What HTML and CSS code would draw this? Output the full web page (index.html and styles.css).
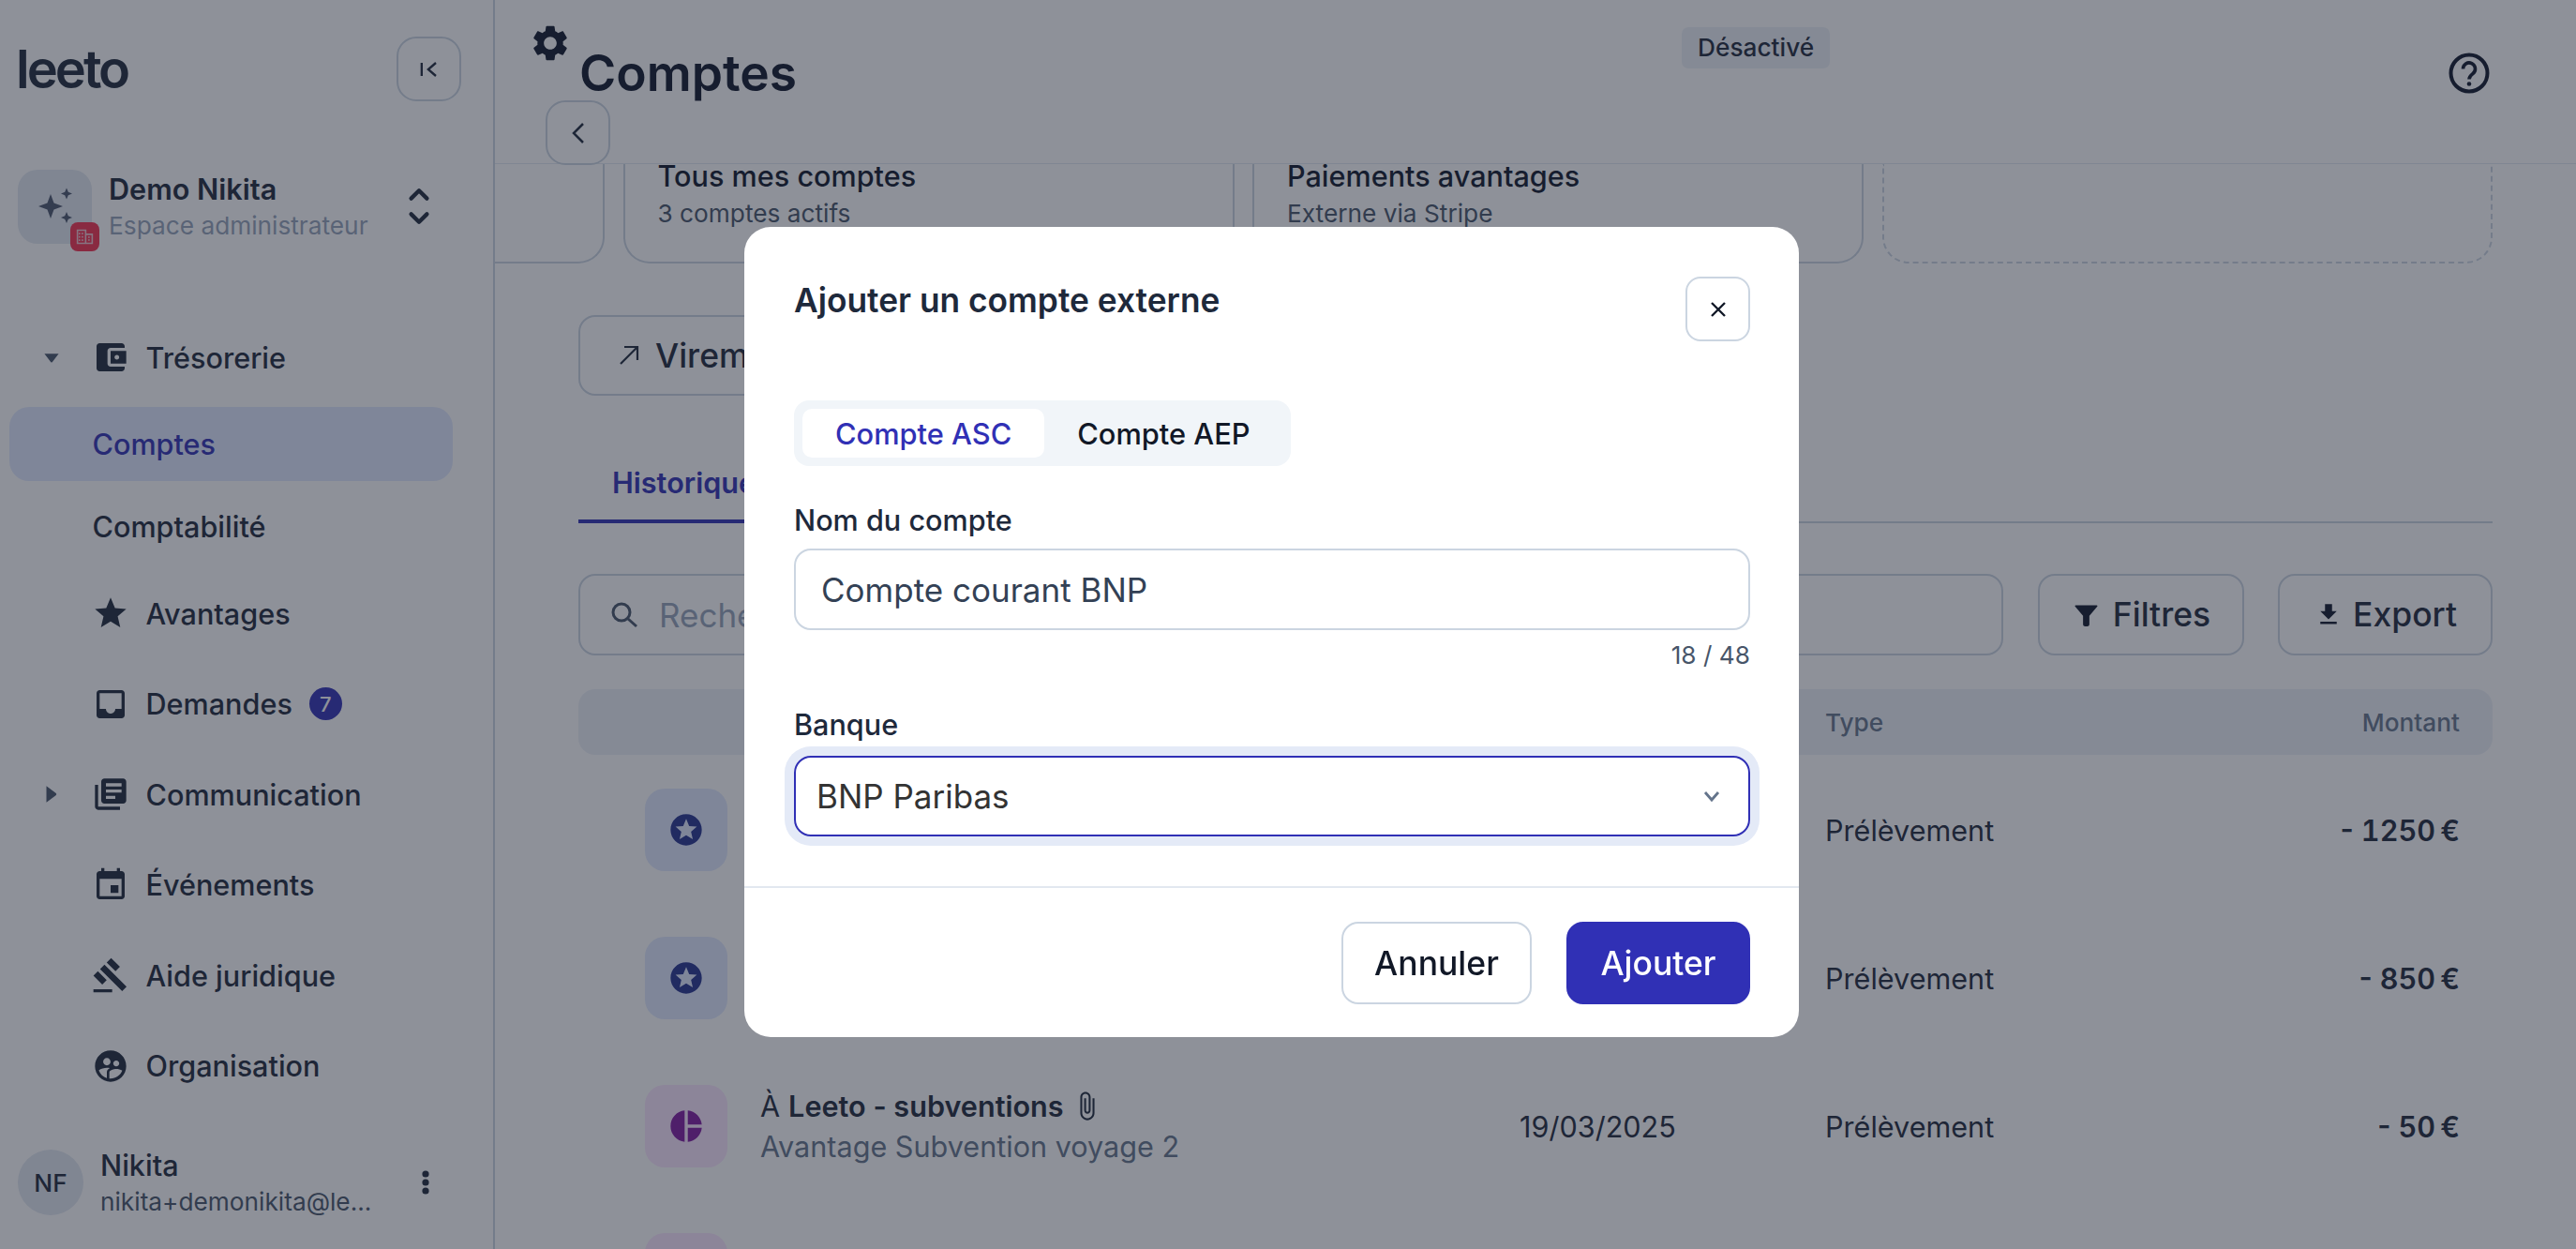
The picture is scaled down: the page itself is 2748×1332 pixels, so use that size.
FILE: index.html
```html
<!DOCTYPE html>
<html lang="fr">
<head>
<meta charset="utf-8">
<title>Comptes - Leeto</title>
<link rel="stylesheet" href="styles.css">
</head>
<body>
<div class="app">
  <aside class="sidebar">
    <div class="brand-row">
      <span class="logo">leeto</span>
      <button class="icon-btn collapse"><svg viewBox="0 0 24 24" class="i22"><path d="M5 6v12M18 6l-7 6 7 6" fill="none" stroke="currentColor" stroke-width="2"/></svg></button>
    </div>
    <div class="org">
      <div class="org-avatar">
        <svg viewBox="0 0 48 48" class="i-spark"><path d="M19 11L22.500 20.500 32 24 22.500 27.500 19 37 15.500 27.500 6 24 15.500 20.500zM36 4.500L37.800 8.700 42 10.500 37.800 12.300 36 16.500 34.200 12.300 30 10.500 34.200 8.700zM36 30L37.800 34.200 42 36 37.800 37.800 36 42 34.200 37.800 30 36 34.200 34.200z" fill="#4b566d"/></svg>
        <span class="org-badge"><svg viewBox="0 0 24 24" class="i-badge"><path d="M3 4h10v16H3zM13 9h8v11h-8zM5.500 7v2M9 7v2M5.500 11v2M9 11v2M5.500 15v2M9 15v2M16 12.500h2M16 16h2" fill="none" stroke="#f0c4cf" stroke-width="1.800"/></svg></span>
      </div>
      <div class="org-text">
        <div class="org-name">Demo Nikita</div>
        <div class="org-role">Espace administrateur</div>
      </div>
      <svg viewBox="0 0 20 40" class="i-updown"><path d="M3 13l7-7 7 7M3 27l7 7 7-7" fill="none" stroke="#1e293b" stroke-width="3.600" stroke-linecap="round" stroke-linejoin="round"/></svg>
    </div>
    <nav class="nav">
      <a class="nav-item">
        <span class="caret"><svg viewBox="0 0 16 12" class="i-caret"><path d="M1 2h14l-6 8a1.200 1.200 0 0 1-2 0z" fill="#475569"/></svg></span>
        <svg viewBox="0 0 24 24" class="nav-icon"><path d="M21 18v1c0 1.100-.9 2-2 2H5c-1.110 0-2-.9-2-2V5c0-1.100.89-2 2-2h14c1.100 0 2 .9 2 2v1h-9c-1.110 0-2 .9-2 2v8c0 1.100.89 2 2 2h9zm-9-2h10V8H12v8zm4-2.500c-.83 0-1.500-.67-1.500-1.500s.67-1.500 1.500-1.500 1.500.67 1.500 1.500-.67 1.500-1.500 1.500z"/></svg>
        <span>Trésorerie</span>
      </a>
      <a class="nav-item sub sub-first active"><span>Comptes</span></a>
      <a class="nav-item sub sub-second"><span>Comptabilité</span></a>
      <a class="nav-item after-sub">
        <span class="caret"></span>
        <svg viewBox="0 0 24 24" class="nav-icon"><path d="M12 17.270L18.180 21l-1.640-7.030L22 9.240l-7.190-.61L12 2 9.190 8.630 2 9.240l5.460 4.730L5.820 21z"/></svg>
        <span>Avantages</span>
      </a>
      <a class="nav-item">
        <span class="caret"></span>
        <svg viewBox="0 0 24 24" class="nav-icon"><path d="M19 3H4.990c-1.110 0-1.980.89-1.980 2L3 19c0 1.100.88 2 1.990 2H19c1.100 0 2-.9 2-2V5c0-1.110-.9-2-2-2zm0 12h-4c0 1.660-1.350 3-3 3s-3-1.340-3-3H4.990V5H19v10z"/></svg>
        <span>Demandes</span>
        <span class="count">7</span>
      </a>
      <a class="nav-item">
        <span class="caret"><svg viewBox="0 0 12 16" class="i-caret-r"><path d="M2 1v14l8-6a1.200 1.200 0 0 0 0-2z" fill="#475569"/></svg></span>
        <svg viewBox="0 0 24 24" class="nav-icon"><path d="M4 6H2v14c0 1.100.9 2 2 2h14v-2H4V6zm16-4H8c-1.100 0-2 .9-2 2v12c0 1.100.9 2 2 2h12c1.100 0 2-.9 2-2V4c0-1.100-.9-2-2-2zm-1 9H9V9h10v2zm-4 4H9v-2h6v2zm4-8H9V5h10v2z"/></svg>
        <span>Communication</span>
      </a>
      <a class="nav-item">
        <span class="caret"></span>
        <svg viewBox="0 0 24 24" class="nav-icon"><path d="M17 12h-5v5h5v-5zM16 1v2H8V1H6v2H5c-1.110 0-1.990.9-1.990 2L3 19c0 1.100.89 2 2 2h14c1.100 0 2-.9 2-2V5c0-1.100-.9-2-2-2h-1V1h-2zm3 18H5V8h14v11z"/></svg>
        <span>Événements</span>
      </a>
      <a class="nav-item">
        <span class="caret"></span>
        <svg viewBox="0 0 24 24" class="nav-icon"><path d="M1 21h12v2H1zM5.245 8.070l2.830-2.827 14.140 14.142-2.828 2.828zM12.317 1l5.657 5.656-2.830 2.830-5.657-5.660zM3.825 9.485l5.657 5.657-2.828 2.828-5.657-5.657z"/></svg>
        <span>Aide juridique</span>
      </a>
      <a class="nav-item">
        <span class="caret"></span>
        <svg viewBox="0 0 24 24" class="nav-icon"><path d="M11.990 2c-5.520 0-10 4.480-10 10s4.480 10 10 10 10-4.480 10-10-4.480-10-10-10zm3.610 6.340c1.070 0 1.930.86 1.930 1.930s-.86 1.930-1.930 1.930-1.930-.86-1.930-1.930c-.01-1.070.86-1.930 1.930-1.930zm-6-1.580c1.300 0 2.360 1.060 2.360 2.360s-1.060 2.360-2.360 2.360-2.360-1.060-2.360-2.360c0-1.310 1.050-2.360 2.360-2.360zm0 9.130v3.750c-2.400-.75-4.300-2.600-5.140-4.960 1.050-1.120 3.670-1.690 5.140-1.690.53 0 1.200.08 1.900.22-1.640.87-1.900 2.020-1.900 2.680zM11.990 20c-.27 0-.53-.01-.79-.04v-4.070c0-1.420 2.940-2.130 4.400-2.130 1.070 0 2.920.39 3.840 1.150-1.170 2.970-4.060 5.090-7.450 5.090z"/></svg>
        <span>Organisation</span>
      </a>
    </nav>
    <div class="user">
      <div class="user-avatar">NF</div>
      <div class="user-text">
        <div class="user-name">Nikita</div>
        <div class="user-mail">nikita+demonikita@le...</div>
      </div>
      <svg viewBox="0 0 8 26" class="i-dots"><circle cx="4" cy="4" r="3.600"/><circle cx="4" cy="13" r="3.600"/><circle cx="4" cy="22" r="3.600"/></svg>
    </div>
  </aside>

  <main class="main">
    <header class="topbar">
      <div class="top-left">
        <svg viewBox="2 2 20 20" class="i-gear"><path d="M19.140 12.940c.04-.3.06-.61.06-.94 0-.32-.02-.64-.07-.94l2.030-1.580c.18-.14.23-.41.12-.61l-1.920-3.320c-.12-.22-.37-.29-.59-.22l-2.390.96c-.5-.38-1.030-.7-1.620-.94l-.36-2.540c-.04-.24-.24-.41-.48-.41h-3.840c-.24 0-.43.17-.47.41l-.36 2.540c-.59.24-1.130.57-1.620.94l-2.390-.96c-.22-.08-.47 0-.59.22L2.740 8.870c-.12.21-.08.47.12.61l2.030 1.580c-.05.3-.09.63-.09.94s.02.64.07.94l-2.030 1.580c-.18.14-.23.41-.12.61l1.920 3.320c.12.22.37.29.59.22l2.390-.96c.5.38 1.030.7 1.620.94l.36 2.540c.05.24.24.41.48.41h3.840c.24 0 .44-.17.47-.41l.36-2.540c.59-.24 1.130-.56 1.620-.94l2.390.96c.22.08.47 0 .59-.22l1.920-3.320c.12-.22.07-.47-.12-.61l-2.010-1.580zM12 15.600c-1.980 0-3.600-1.620-3.600-3.600s1.620-3.600 3.600-3.600 3.600 1.620 3.600 3.600-1.620 3.600-3.600 3.600z"/></svg>
        <button class="icon-btn back"><svg viewBox="0 0 24 24" class="i-back"><path d="M16 4l-8 8 8 8" fill="none" stroke="currentColor" stroke-width="2"/></svg></button>
      </div>
      <h1 class="page-title">Comptes</h1>
      <span class="status">Désactivé</span>
      <svg viewBox="0 0 44 44" class="i-help"><circle cx="22" cy="22" r="19.500" fill="none" stroke="currentColor" stroke-width="4"/><path d="M15.500 17.500a6.500 6.500 0 1 1 10.500 5c-2.500 2-4 3-4 6" fill="none" stroke="currentColor" stroke-width="3.600"/><circle cx="22" cy="33.500" r="2.300" fill="currentColor"/></svg>
    </header>

    <section class="content">
      <div class="cards">
        <div class="card"></div>
        <div class="card"><div class="card-title">Tous mes comptes</div><div class="card-sub">3 comptes actifs</div></div>
        <div class="card"><div class="card-title">Paiements avantages</div><div class="card-sub">Externe via Stripe</div></div>
        <div class="card dashed"></div>
      </div>

      <div class="actions">
        <button class="btn transfer"><svg viewBox="0 0 24 24" class="i-arrow"><path d="M3 21L21 3M7 3h14v14" fill="none" stroke="currentColor" stroke-width="2.200"/></svg>Virement</button>
      </div>

      <div class="tabs"><a class="tab">Historique</a></div>

      <div class="toolbar">
        <div class="search">
          <svg viewBox="0 0 30 30" class="i-search"><circle cx="12" cy="12" r="9" fill="none" stroke="#475569" stroke-width="3"/><path d="M19 19l9 8" stroke="#475569" stroke-width="3"/></svg>
          <span class="placeholder">Rechercher</span>
        </div>
        <button class="btn filter"><svg viewBox="0 0 24 24" class="i-tool"><path d="M2 3h20c.6 0 .9.7.5 1.200L15 13v8c0 1.300-1 2-2 2h-2c-1 0-2-.7-2-2v-8L1.500 4.200C1.100 3.700 1.400 3 2 3z"/></svg>Filtres</button>
        <button class="btn export"><svg viewBox="4 2 16 20" class="i-tool dl"><path d="M5 20h14v-2H5v2zM19 9h-4V3H9v6H5l7 7 7-7z"/></svg>Export</button>
      </div>

      <div class="table">
        <div class="row head"><span></span><span></span><span></span><span class="muted">Type</span><span class="muted">Montant</span></div>
        <div class="row">
          <span class="tile blue"><svg viewBox="0 0 24 24"><path d="M11.990 2C6.470 2 2 6.480 2 12s4.470 10 9.990 10C17.520 22 22 17.520 22 12S17.520 2 11.990 2zm4.240 16L12 15.450 7.770 18l1.120-4.810-3.730-3.230 4.920-.42L12 5l1.920 4.530 4.920.42-3.730 3.230L16.230 18z"/></svg></span>
          <span></span><span></span><span>Prélèvement</span><span class="amount">- 1250 €</span>
        </div>
        <div class="row">
          <span class="tile blue"><svg viewBox="0 0 24 24"><path d="M11.990 2C6.470 2 2 6.480 2 12s4.470 10 9.990 10C17.520 22 22 17.520 22 12S17.520 2 11.990 2zm4.240 16L12 15.450 7.770 18l1.120-4.810-3.730-3.230 4.920-.42L12 5l1.920 4.530 4.920.42-3.730 3.230L16.230 18z"/></svg></span>
          <span></span><span></span><span>Prélèvement</span><span class="amount">- 850 €</span>
        </div>
        <div class="row">
          <span class="tile purple"><svg viewBox="0 0 24 24"><path d="M11 2v20c-5.070-.5-9-4.790-9-10s3.930-9.500 9-10zm2.030 0v8.990H22c-.47-4.740-4.240-8.520-8.970-8.990zm0 11.010V22c4.740-.47 8.500-4.250 8.970-8.990h-8.970z"/></svg></span>
          <div class="who">
            <div class="who-title">À <b>Leeto - subventions</b><svg viewBox="6 0 13 24" class="i-clip"><path d="M16.500 6v11.500c0 2.210-1.790 4-4 4s-4-1.790-4-4V5c0-1.380 1.120-2.500 2.500-2.500s2.500 1.120 2.500 2.500v10.500c0 .55-.45 1-1 1s-1-.45-1-1V6H10v9.500c0 1.380 1.120 2.500 2.500 2.500s2.500-1.120 2.500-2.500V5c0-2.210-1.790-4-4-4S7 2.790 7 5v12.500c0 3.040 2.460 5.500 5.500 5.500s5.500-2.460 5.500-5.500V6h-1.500z"/></svg></div>
            <div class="who-sub">Avantage Subvention voyage 2</div>
          </div>
          <span>19/03/2025</span><span>Prélèvement</span><span class="amount">- 50 €</span>
        </div>
        <div class="row">
          <span class="tile purple"><svg viewBox="0 0 24 24"><path d="M11 2v20c-5.070-.5-9-4.790-9-10s3.930-9.500 9-10zm2.030 0v8.990H22c-.47-4.740-4.240-8.520-8.970-8.990zm0 11.010V22c4.740-.47 8.500-4.250 8.970-8.990h-8.970z"/></svg></span>
          <div class="who">
            <div class="who-title">À <b>Leeto - subventions</b><svg viewBox="6 0 13 24" class="i-clip"><path d="M16.500 6v11.500c0 2.210-1.790 4-4 4s-4-1.790-4-4V5c0-1.380 1.120-2.500 2.500-2.500s2.500 1.120 2.500 2.500v10.500c0 .55-.45 1-1 1s-1-.45-1-1V6H10v9.500c0 1.380 1.120 2.500 2.500 2.500s2.500-1.120 2.500-2.500V5c0-2.210-1.790-4-4-4S7 2.790 7 5v12.500c0 3.040 2.460 5.500 5.500 5.500s5.500-2.460 5.500-5.500V6h-1.500z"/></svg></div>
          </div>
          <span></span><span></span><span></span>
        </div>
      </div>
    </section>
  </main>
</div>

<div class="overlay">
  <div class="modal">
    <div class="modal-body">
      <div class="modal-head">
        <h2 class="modal-title">Ajouter un compte externe</h2>
        <button class="icon-btn close"><svg viewBox="0 0 24 24" class="i-close"><path d="M5 5l14 14M19 5L5 19" fill="none" stroke="#111827" stroke-width="2.400"/></svg></button>
      </div>
      <div class="segmented">
        <span class="seg on">Compte ASC</span>
        <span class="seg">Compte AEP</span>
      </div>
      <label class="field-label first">Nom du compte</label>
      <div class="input">Compte courant BNP</div>
      <div class="counter">18 / 48</div>
      <label class="field-label second">Banque</label>
      <div class="select">
        <span>BNP Paribas</span>
        <svg viewBox="0 0 24 24" class="i-chev"><path d="M5 8l7 8 7-8" fill="none" stroke="#64748b" stroke-width="2.800"/></svg>
      </div>
    </div>
    <div class="modal-foot">
      <button class="btn ghost">Annuler</button>
      <button class="btn primary">Ajouter</button>
    </div>
  </div>
</div>
</body>
</html>
```

FILE: styles.css
```css
* { box-sizing: border-box; }
html, body { margin: 0; height: 100%; overflow: hidden; }
body { font-family: Inter, "Liberation Sans", sans-serif; color: #1e293b; background: #fff; font-size: 30.600px; }
button { font-family: inherit; background: none; cursor: pointer; color: inherit; padding: 0; }
svg { display: block; flex: none; }

.app { display: flex; height: 1332px; }

/* Sidebar */
.sidebar { width: 528px; flex: none; border-right: 2px solid #cbd5e1; padding: 39px 0 0; display: flex; flex-direction: column; }
.brand-row { display: flex; align-items: center; justify-content: space-between; padding: 0 34px 0 17px; height: 69px; }
.logo { font-size: 56px; font-weight: 600; letter-spacing: -3px; line-height: 1; color: #1e293b; }
.icon-btn { width: 69px; height: 69px; border: 2px solid #cbd5e1; border-radius: 21px; display: flex; align-items: center; justify-content: center; }
.i22 { width: 28px; height: 28px; }

.org { display: flex; align-items: center; margin: 72px 0 0 19px; padding-right: 67px; }
.org-avatar { width: 79px; height: 79px; border-radius: 21px; background: #e2e8f0; display: flex; align-items: center; justify-content: center; position: relative; flex: none; }
.i-spark { width: 48px; height: 48px; }
.org-badge { position: absolute; right: -8px; bottom: -8px; width: 31px; height: 31px; border-radius: 8px; background: #f5304f; display: flex; align-items: center; justify-content: center; }
.i-badge { width: 21px; height: 21px; }
.org-text { margin-left: 18px; flex: 1; padding-top: 2px; }
.org-name { font-size: 30.600px; font-weight: 600; line-height: 40px; }
.org-role { font-size: 26.250px; line-height: 38px; color: #94a3b8; }
.i-updown { width: 24px; height: 48px; }

.nav { display: flex; flex-direction: column; gap: 17.500px; margin-top: 81.500px; }
.nav-item { display: flex; align-items: center; height: 79px; font-size: 30.600px; font-weight: 500; }
.caret { width: 103px; display: flex; justify-content: center; flex: none; padding-left: 6px; }
.i-caret { width: 18px; height: 13px; }
.i-caret-r { width: 15px; height: 20px; }
.nav-icon { width: 40px; height: 40px; margin: 0 17.500px 0 -5px; fill: #1e293b; }
.sub { margin-left: 10px; margin-right: 43px; padding-left: 88.500px; border-radius: 21px; }
.sub-first { margin-top: -4px; }
.sub-second { margin-top: -9px; }
.after-sub { margin-top: -3.500px; }
.active { background: #e1e9ff; color: #3030b5; }
.count { width: 35px; height: 35px; border-radius: 50%; background: #3030b5; color: #fff; font-size: 22px; display: flex; align-items: center; justify-content: center; margin-left: 18px; }

.user { display: flex; align-items: center; margin: auto 0 30px 19px; padding-right: 68px; }
.user-avatar { width: 70px; height: 70px; border-radius: 50%; background: #e2e8f0; display: flex; align-items: center; justify-content: center; font-size: 26.250px; font-weight: 500; flex: none; }
.user-text { margin-left: 18px; flex: 1; padding-top: 4px; }
.user-name { font-size: 30.600px; font-weight: 500; line-height: 38px; }
.user-mail { font-size: 26.250px; line-height: 40px; color: #475569; white-space: nowrap; }
.i-dots { width: 8px; height: 26px; fill: #1e293b; margin-top: 0; }

/* Main */
.main { flex: 1; min-width: 0; display: flex; flex-direction: column; }
.topbar { height: 175px; flex: none; display: flex; align-items: flex-start; border-bottom: 1px solid #e2e8f0; padding-left: 40px; }
.top-left { display: flex; flex-direction: column; padding-top: 27px; width: 83px; flex: none; }
.i-gear { width: 38px; height: 38px; fill: #0f172a; }
.back { margin: 42px 0 0 14px; }
.i-back { width: 30px; height: 30px; }
.page-title { font-size: 53.300px; font-weight: 600; line-height: 64px; margin: 46px 0 0 -33px; color: #0f172a; }
.status { background: #edf1f7; border-radius: 7px; font-size: 26.250px; font-weight: 500; height: 44px; line-height: 44px; padding: 0 17px; margin: 29px 0 0 944px; }
.i-help { width: 44px; height: 44px; margin: 56px 0 0 660px; color: #0f172a; }

.content { flex: 1; min-height: 0; padding: 0 89px; }
.cards { display: grid; grid-template-columns: 117px 652px 652px 651px; gap: 19.500px; margin-left: -89px; height: 106px; }
.card { border: 2px solid #cbd5e1; border-top: 0; border-radius: 0 0 28px 28px; padding: 0 0 0 35px; }
.card:first-child { border-left: 0; border-radius: 0 0 28px 0; }
.dashed { border-style: dashed; border-top: 0; }
.card-title { font-size: 30.600px; font-weight: 500; line-height: 26px; color: #0f172a; }
.card-sub { font-size: 26.250px; line-height: 30px; margin-top: 12px; color: #475569; }

.actions { margin-top: 55px; display: flex; }
.btn { display: flex; align-items: center; justify-content: center; border: 2px solid #cbd5e1; border-radius: 18px; font-size: 35.500px; font-weight: 500; }
.transfer { height: 86px; padding: 0 36px 0 40px; gap: 16px; }
.i-arrow { width: 24px; height: 24px; }

.tabs { margin-top: 64px; border-bottom: 2px solid #cbd5e1; display: flex; height: 72px; }
.tab { display: block; padding: 0 36px; line-height: 58px; height: 72px; border-bottom: 4px solid #3030b5; color: #3030b5; font-weight: 600; font-size: 30.600px; }

.toolbar { display: flex; margin-top: 54px; gap: 36.500px; }
.search { flex: 1; height: 87px; border: 2px solid #cbd5e1; border-radius: 18px; display: flex; align-items: center; padding-left: 32px; }
.i-search { width: 30px; height: 30px; }
.placeholder { color: #94a3b8; font-size: 35px; margin-left: 22px; }
.filter { width: 220px; height: 87px; gap: 15px; padding-left: 3px; }
.export { width: 229px; height: 87px; gap: 16px; padding-left: 6px; }
.i-tool { width: 27px; height: 27px; fill: #0f172a; }
.dl { width: 20px; height: 25px; }

.table { margin-top: 36px; height: 597px; overflow: hidden; }
.row { display: grid; grid-template-columns: 123px 810px 326px 1fr auto; align-items: center; padding: 0 35px 0 71px; height: 158px; font-size: 30.600px; }
.head { height: 70px; background: #edf1f7; border-radius: 18px; font-size: 26.250px; margin-bottom: 1px; }
.muted { color: #64748b; font-weight: 500; }
.amount { font-weight: 600; font-variant-numeric: tabular-nums; word-spacing: -3px; }
.tile { width: 88px; height: 88px; border-radius: 21px; display: flex; align-items: center; justify-content: center; }
.tile svg { width: 40px; height: 40px; }
.blue { background: #e1e9ff; fill: #24328f; }
.purple { background: #fbe6ff; fill: #801aa0; }
.who-title { font-size: 30.600px; display: flex; align-items: center; gap: 9px; line-height: 40px; }
.who-title b { font-weight: 600; }
.i-clip { width: 18px; height: 33px; margin-left: 7px; fill: #1e293b; }
.who-sub { font-size: 30.600px; color: #64748b; line-height: 40px; margin-top: 3px; }

/* Modal */
.overlay { position: fixed; inset: 0; background: rgba(29, 36, 51, .5); padding: 242px 0 0 794px; }
.modal { width: 1125px; height: 864px; background: #fff; border-radius: 28px; display: flex; flex-direction: column; }
.modal-body { padding: 53px 52px 0 53px; height: 705px; border-bottom: 2px solid #e2e8f0; }
.modal-head { display: flex; justify-content: space-between; align-items: flex-start; }
.modal-title { font-size: 35.300px; font-weight: 600; line-height: 52px; margin: 0; color: #1e293b; }
.close { border-radius: 16px; }
.i-close { width: 24px; height: 24px; }
.segmented { display: inline-flex; margin-top: 63px; height: 70px; background: #f1f5f9; border-radius: 16px; padding: 9px; gap: 0; }
.seg { display: flex; align-items: center; padding: 0 35px; border-radius: 10px; font-size: 30.800px; font-weight: 500; color: #111827; }
.seg.on { background: #fff; color: #3030b5; }
.field-label { display: block; font-size: 30.600px; font-weight: 500; line-height: 38px; }
.first { margin-top: 39px; }
.input { margin-top: 11px; height: 87px; border: 2px solid #cbd5e1; border-radius: 18px; display: flex; align-items: center; padding-left: 27px; font-size: 35px; color: #334155; }
.counter { text-align: right; font-size: 26.250px; line-height: 30px; margin-top: 12px; color: #475569; }
.second { margin-top: 40px; }
.select { margin-top: 14px; height: 86px; border: 2px solid #3030b5; border-radius: 18px; box-shadow: 0 0 0 10px #e4eaf7; display: flex; align-items: center; justify-content: space-between; padding: 0 27px 0 22px; font-size: 35px; color: #333; }
.i-chev { width: 24px; height: 24px; }
.modal-foot { display: flex; justify-content: flex-end; gap: 37px; padding: 36px 52px 0 0; }
.ghost { width: 203px; height: 88px; color: #111827; }
.primary { width: 196px; height: 88px; background: #3030b5; border-color: #3030b5; color: #fff; }
```
